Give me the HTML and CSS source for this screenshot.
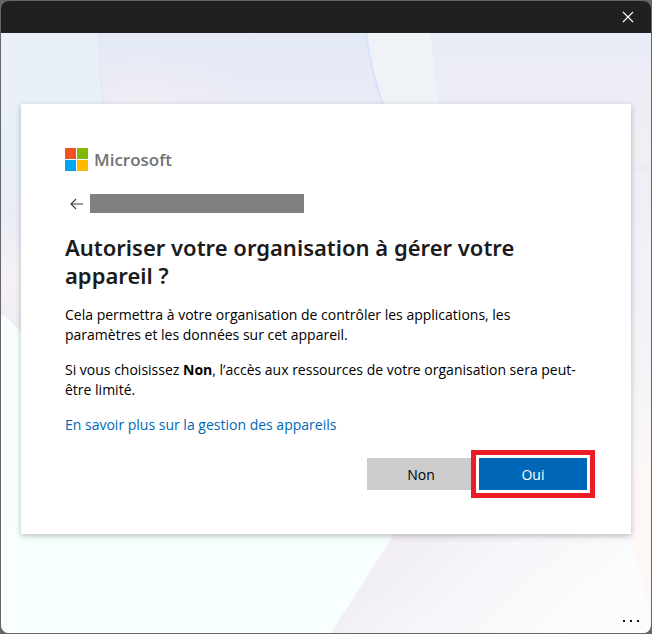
FILE: index.html
```
<!DOCTYPE html>
<html lang="fr">
<head>
    <meta charset="utf-8">
    <meta name="viewport" content="width=device-width, initial-scale=1">
    <title>Microsoft</title>
    <link rel="stylesheet" href="styles.css">
</head>
<body>
<div class="window">
    <header class="titlebar">
        <button type="button" class="close-btn" aria-label="Fermer">
            <svg width="12" height="12" viewBox="0 0 12 12"><path d="M1 1l10 10M11 1L1 11" stroke="#fff" stroke-width="1.1" fill="none"/></svg>
        </button>
    </header>
    <main class="content">
        <svg class="backdrop" viewBox="0 0 650 600" preserveAspectRatio="none" aria-hidden="true">
            <defs>
                <linearGradient id="left" x1="0" y1="0" x2="0" y2="1">
                    <stop offset="0" stop-color="#e9f0f8"/>
                    <stop offset="0.4" stop-color="#e8f0f7"/>
                    <stop offset="0.6" stop-color="#e9edf7"/>
                    <stop offset="0.8" stop-color="#f5f1f6"/>
                    <stop offset="1" stop-color="#f1edf5"/>
                </linearGradient>
                <linearGradient id="middle" x1="0" y1="0" x2="0" y2="1">
                    <stop offset="0" stop-color="#e3e9f6"/>
                    <stop offset="1" stop-color="#eaecf6"/>
                </linearGradient>
                <radialGradient id="glow">
                    <stop offset="0" stop-color="#f1edf4"/>
                    <stop offset="1" stop-color="#f1edf4" stop-opacity="0"/>
                </radialGradient>
                <linearGradient id="right" x1="0" y1="0" x2="0" y2="1">
                    <stop offset="0" stop-color="#e9ecf6"/>
                    <stop offset="0.2" stop-color="#f2eef4"/>
                    <stop offset="0.25" stop-color="#eeeff6"/>
                    <stop offset="0.55" stop-color="#f5f3f8"/>
                    <stop offset="0.75" stop-color="#fdf8f5"/>
                    <stop offset="1" stop-color="#fdf8f5"/>
                </linearGradient>
                <linearGradient id="bottom" x1="0" y1="0" x2="1" y2="0.4">
                    <stop offset="0" stop-color="#f4edf4"/>
                    <stop offset="0.35" stop-color="#f2eef5"/>
                    <stop offset="0.6" stop-color="#f7f6fa"/>
                    <stop offset="1" stop-color="#fafcfd"/>
                </linearGradient>
            </defs>
            <rect width="650" height="600" fill="url(#right)"/>
            <rect width="110" height="300" fill="url(#left)"/>
            <path d="M96 0Q96 40 103 80H430L366 0z" fill="url(#middle)"/>
            <ellipse cx="145" cy="76" rx="110" ry="60" fill="url(#glow)"/>
            <path d="M0 0H96Q96 40 103 80H0z" fill="#e9f0f8"/>
            <path d="M98 0Q98 40 104 80" stroke="#e6eaf4" stroke-width="3" fill="none"/>
            <path d="M365 0Q370 40 385 80H439L430 0z" fill="#eff2f7"/>
            <path d="M365 0Q370 40 385 80" stroke="#d5e4fb" stroke-width="2" fill="none"/>
            <path d="M430 0L439 80" stroke="#e1edf9" stroke-width="1" fill="none"/>
            <path d="M605 145Q630 139 650 133" stroke="#dbeaf5" stroke-width="1" fill="none"/>
            <path d="M320 480H622L628 501Q642 545 649 590V600H320z" fill="url(#bottom)"/>
            <path d="M0 282Q4 283 8 287L60 340L400 490L330 600H0z" fill="#f7ffff"/>
        </svg>
        <section class="card">
            <div class="logo">
                <svg width="23" height="23" viewBox="0 0 23 23" aria-hidden="true">
                    <path fill="#f25022" d="M0 0h11v11H0z"/>
                    <path fill="#7fba00" d="M12 0h11v11H12z"/>
                    <path fill="#00a4ef" d="M0 12h11v11H0z"/>
                    <path fill="#ffb900" d="M12 12h11v11H12z"/>
                </svg>
                <span>Microsoft</span>
            </div>
            <div class="identity">
                <button type="button" class="back-btn" aria-label="Retour">
                    <svg width="14" height="12" viewBox="0 0 14 12"><path d="M13 6H1M6 1L1 6l5 5" stroke="#404040" stroke-width="1.1" fill="none"/></svg>
                </button>
                <span class="account"></span>
            </div>
            <h1>Autoriser votre organisation à gérer votre appareil ?</h1>
            <p>Cela permettra à votre organisation de contrôler les applications, les paramètres et les données sur cet appareil.</p>
            <p>Si vous choisissez <strong>Non</strong>, l’accès aux ressources de votre organisation sera peut-être limité.</p>
            <p><a href="#">En savoir plus sur la gestion des appareils</a></p>
            <div class="actions">
                <button type="button" class="btn">Non</button>
                <button type="button" class="btn btn-primary">Oui</button>
            </div>
        </section>
        <button type="button" class="more-btn" aria-label="Plus d'options">
            <svg width="18" height="2" viewBox="0 0 18 2"><path d="M0 0h2v2H0zM7 0h2v2H7zM14 0h2v2h-2z" fill="#111"/></svg>
        </button>
    </main>
</div>
</body>
</html>
```
FILE: styles.css
```
* {
    box-sizing: border-box;
}

body {
    margin: 0;
    background-color: #666;
    font-family: "Open Sans", "Segoe UI", sans-serif;
    font-size: 14px;
    line-height: 20px;
    color: #000;
}

button {
    border: none;
    padding: 0;
    background: none;
    font-family: inherit;
    font-size: inherit;
    cursor: pointer;
}

svg {
    display: block;
}

.window {
    display: flex;
    flex-direction: column;
    min-height: calc(100vh - 2px);
    margin: 1px;
    border-radius: 8px;
    overflow: hidden;
}

.titlebar {
    display: flex;
    justify-content: flex-end;
    height: 32px;
    background-color: #202020;
}

.close-btn {
    display: flex;
    align-items: center;
    justify-content: center;
    width: 46px;
}

.content {
    position: relative;
    flex: 1;
    display: flex;
    flex-direction: column;
    justify-content: space-between;
    padding: 71px 20px 0;
}

.backdrop {
    position: absolute;
    top: 0;
    left: 0;
    width: 100%;
    height: 100%;
}

.card {
    position: relative;
    padding: 44px;
    background-color: #fff;
    box-shadow: 0 2px 6px rgba(0, 0, 0, 0.25);
}

.logo {
    display: flex;
    align-items: center;
    gap: 6px;
    height: 23px;
    font-size: 17px;
    font-weight: 600;
    color: #737373;
}

.identity {
    display: flex;
    align-items: center;
    margin-top: 23px;
}

.back-btn {
    display: flex;
    justify-content: center;
    width: 24px;
    margin-right: 1px;
}

.account {
    width: 214px;
    height: 19px;
    background-color: #808080;
}

h1 {
    margin: 20px 0 16px;
    font-family: "Noto Sans", "Segoe UI", sans-serif;
    font-size: 22px;
    font-weight: 600;
    line-height: 28px;
    color: #1b1b1b;
}

p {
    margin: 0 0 15px;
}

a {
    color: #0067b8;
    text-decoration: none;
}

.actions {
    display: flex;
    justify-content: flex-end;
    gap: 4px;
    margin-top: 23px;
}

.btn {
    width: 108px;
    height: 32px;
    background-color: #ccc;
}

.btn-primary {
    background-color: #0067b8;
    color: #fff;
    outline: 5px solid #ed1c24;
    outline-offset: 3px;
    box-shadow: 0 0 0 3px #fff;
}

.more-btn {
    position: relative;
    align-self: flex-end;
    display: flex;
    align-items: center;
    justify-content: center;
    width: 38px;
    height: 24px;
    margin-right: -20px;
}
```
